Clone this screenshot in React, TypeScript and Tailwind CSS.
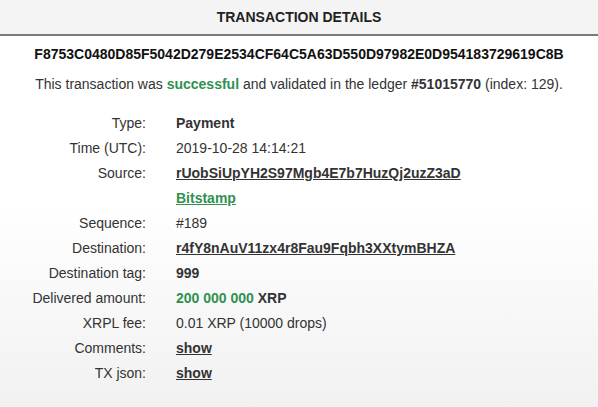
const rows: { label: string; value: React.ReactNode }[] = [
  { label: 'Type:', value: <span className="font-bold">Payment</span> },
  { label: 'Time (UTC):', value: '2019-10-28 14:14:21' },
  {
    label: 'Source:',
    value: <a className="font-bold underline">rUobSiUpYH2S97Mgb4E7b7HuzQj2uzZ3aD</a>,
  },
  {
    label: '',
    value: <a className="font-bold underline text-[#2f9150]">Bitstamp</a>,
  },
  { label: 'Sequence:', value: '#189' },
  {
    label: 'Destination:',
    value: <a className="font-bold underline">r4fY8nAuV11zx4r8Fau9Fqbh3XXtymBHZA</a>,
  },
  { label: 'Destination tag:', value: <span className="font-bold">999</span> },
  {
    label: 'Delivered amount:',
    value: (
      <span className="font-bold">
        <span className="text-[#2f9150]">200 000 000</span> XRP
      </span>
    ),
  },
  { label: 'XRPL fee:', value: '0.01 XRP (10000 drops)' },
  { label: 'Comments:', value: <a className="font-bold underline">show</a> },
  { label: 'TX json:', value: <a className="font-bold underline">show</a> },
]

export default function App() {
  return (
    <div className="w-[598px] h-[407px] overflow-hidden bg-gradient-to-b from-white via-white to-[#f1f1f1] font-['Liberation_Sans',Arial,sans-serif] text-[#333] text-[14px]">
      <div className="h-[36px] bg-[#f4f4f4] border-b-2 border-[#7a7a7a] flex items-center justify-center text-[14px] font-bold text-[#222]">
        TRANSACTION DETAILS
      </div>

      <div className="mt-[9px] leading-[18px] text-center font-bold text-[#111]">
        F8753C0480D85F5042D279E2534CF64C5A63D550D97982E0D954183729619C8B
      </div>

      <div className="mt-[12px] leading-[18px] text-center">
        This transaction was <span className="font-bold text-[#2f9150]">successful</span> and
        validated in the ledger <span className="font-bold">#51015770</span> (index: 129).
      </div>

      <div className="mt-[18px] grid grid-cols-[146px_1fr] gap-x-[30px]">
        {rows.map((r, i) => (
          <div key={i} className="contents">
            <div className="text-right leading-[25px]">{r.label}</div>
            <div className="leading-[25px]">{r.value}</div>
          </div>
        ))}
      </div>
    </div>
  )
}
